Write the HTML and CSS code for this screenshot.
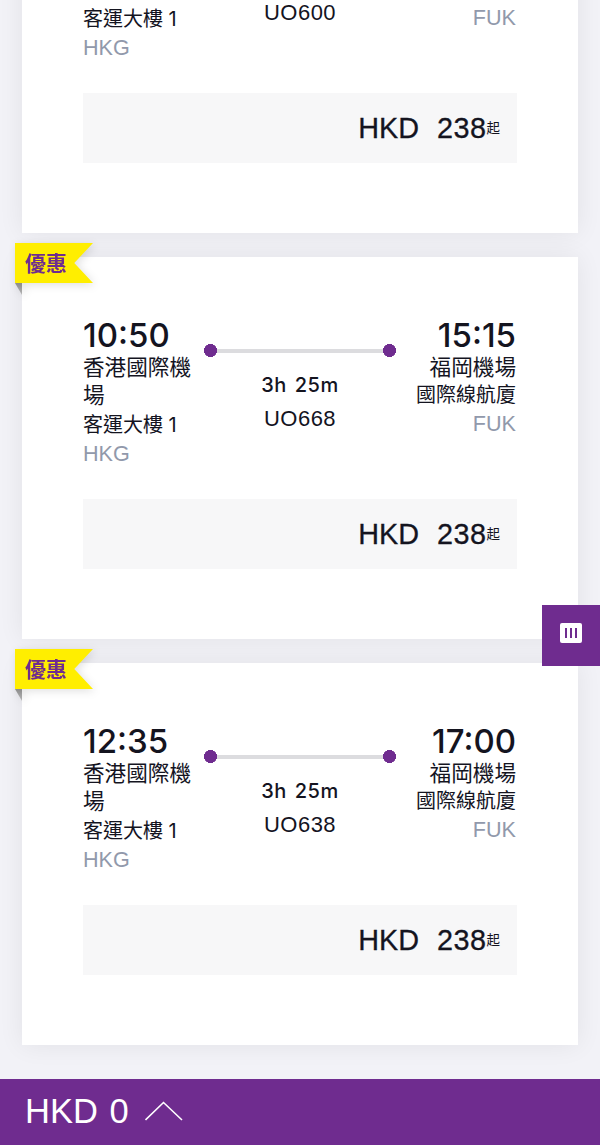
FILE: index.html
```html
<!DOCTYPE html>
<html lang="zh-Hant">
  <head>
    <meta charset="UTF-8" />
    <meta name="viewport" content="width=device-width, initial-scale=1.0" />
    <title>航班選擇</title>
    <link rel="stylesheet" href="styles.css">
  </head>

  <body>
    <div class="flight-list">
      <div class="card">
        <div class="route">
          <div class="point">
            <div class="time"></div>
            <div class="place">香港國際機場</div>
            <div class="terminal">客運大樓 1</div>
            <div class="code">HKG</div>
          </div>
          <div class="middle">
            <div class="track"></div>
            <div class="duration">3h 25m</div>
            <div class="flight-no">UO600</div>
          </div>
          <div class="point point-end">
            <div class="time"></div>
            <div class="place">福岡機場</div>
            <div class="terminal">國際線航廈</div>
            <div class="code">FUK</div>
          </div>
        </div>
        <div class="price"><span class="currency">HKD</span><span class="amount">238</span><span class="from">起</span></div>
      </div>

      <div class="card">
        <div class="badge"><span>優惠</span></div>
        <div class="route">
          <div class="point">
            <div class="time">10:50</div>
            <div class="place">香港國際機場</div>
            <div class="terminal">客運大樓 1</div>
            <div class="code">HKG</div>
          </div>
          <div class="middle">
            <div class="track"></div>
            <div class="duration">3h 25m</div>
            <div class="flight-no">UO668</div>
          </div>
          <div class="point point-end">
            <div class="time">15:15</div>
            <div class="place">福岡機場</div>
            <div class="terminal">國際線航廈</div>
            <div class="code">FUK</div>
          </div>
        </div>
        <div class="price"><span class="currency">HKD</span><span class="amount">238</span><span class="from">起</span></div>
      </div>

      <div class="card">
        <div class="badge"><span>優惠</span></div>
        <div class="route">
          <div class="point">
            <div class="time">12:35</div>
            <div class="place">香港國際機場</div>
            <div class="terminal">客運大樓 1</div>
            <div class="code">HKG</div>
          </div>
          <div class="middle">
            <div class="track"></div>
            <div class="duration">3h 25m</div>
            <div class="flight-no">UO638</div>
          </div>
          <div class="point point-end">
            <div class="time">17:00</div>
            <div class="place">福岡機場</div>
            <div class="terminal">國際線航廈</div>
            <div class="code">FUK</div>
          </div>
        </div>
        <div class="price"><span class="currency">HKD</span><span class="amount">238</span><span class="from">起</span></div>
      </div>
    </div>

    <div class="side-button">
      <svg width="22" height="20" viewBox="0 0 22 20">
        <rect width="22" height="20" rx="2" fill="#fff" />
        <rect x="5" y="5" width="2" height="10" fill="#6f2c8f" />
        <rect x="10" y="5" width="2" height="10" fill="#6f2c8f" />
        <rect x="15" y="5" width="2" height="10" fill="#6f2c8f" />
      </svg>
    </div>

    <div class="total-bar">
      <span class="total">HKD 0</span>
      <svg width="38" height="20" viewBox="0 0 38 20">
        <polyline points="0.5,19 18.5,1.5 37,19" fill="none" stroke="#fff" stroke-width="1.6" />
      </svg>
    </div>
  </body>
</html>
```

FILE: styles.css
```css
html,
body {
  height: 100%;
}

body {
  margin: 0;
  overflow: hidden;
  background: #f2f2f7;
  color: #14141f;
  font-family: "Liberation Sans", "Noto Sans CJK TC", sans-serif;
  font-size: 21.6px;
  line-height: 29px;
}

/* the page is scrolled, the first card starts above the window */
.flight-list {
  margin-top: -149px;
  padding: 0 22px;
  display: flex;
  flex-direction: column;
  gap: 24px;
}

.card {
  position: relative;
  height: 382px;
  box-sizing: border-box;
  padding: 61px 61px 70px;
  background: #fff;
  box-shadow: 0 0 24px rgba(0, 0, 0, 0.07);
}

.route {
  display: flex;
}

.point {
  width: 118px;
  flex-shrink: 0;
}

.point-end {
  text-align: right;
  padding-right: 1px;
  box-sizing: border-box;
}

.time {
  height: 35px;
  font-family: Inter, "Liberation Sans", sans-serif;
  font-size: 33px;
  font-weight: 500;
  line-height: 35px;
}

.place {
  font-family: Inter, "Noto Sans CJK TC", sans-serif;
  font-size: 21.6px;
  line-height: 28px;
}

.terminal {
  font-family: Inter, "Noto Sans CJK TC", sans-serif;
  font-size: 20px;
}

.point:first-child .terminal {
  margin-top: 2px;
}

.code {
  margin-top: -1px;
  color: #9199ab;
}

.middle {
  flex: 1;
  text-align: center;
  padding-top: 26px;
}

.track {
  position: relative;
  height: 13px;
  margin: 0 3px 14px;
}

.track::before {
  content: "";
  position: absolute;
  left: 6px;
  right: 6px;
  top: 5px;
  height: 4px;
  background: #dcdcdf;
}

.track::after {
  content: "";
  position: absolute;
  top: 0;
  left: 0;
  right: 0;
  height: 13px;
  background:
    radial-gradient(circle 6.5px at 6.5px 6.5px, #6f2c8f 98%, transparent 100%),
    radial-gradient(circle 6.5px at calc(100% - 6.5px) 6.5px, #6f2c8f 98%, transparent 100%);
}

.duration {
  font-family: Inter, "Liberation Sans", sans-serif;
  font-size: 20px;
  font-weight: 500;
  letter-spacing: 0.5px;
  word-spacing: 2px;
}

.flight-no {
  margin-top: 4px;
  font-size: 22px;
  letter-spacing: 0.5px;
}

.price {
  display: flex;
  justify-content: flex-end;
  align-items: center;
  height: 70px;
  margin-top: 31px;
  padding-right: 17px;
  background: #f7f7f8;
  font-size: 28.8px;
  -webkit-text-stroke: 0.3px #14141f;
}

.amount {
  margin-left: 18px;
  letter-spacing: 0.5px;
}

.from {
  font-size: 13.5px;
  -webkit-text-stroke: 0;
}

.badge {
  position: absolute;
  left: -7px;
  top: -14px;
  width: 78px;
  height: 52px;
  filter: drop-shadow(2px 2px 4px rgba(0, 0, 0, 0.12));
}

.badge::before {
  content: "";
  position: absolute;
  left: 0;
  top: 0;
  width: 78px;
  height: 40px;
  background: #ffee00;
  clip-path: polygon(0 0, 100% 0, 76% 50%, 100% 100%, 0 100%);
}

/* fold under the ribbon */
.badge::after {
  content: "";
  position: absolute;
  left: 0;
  top: 40px;
  width: 7px;
  height: 12px;
  background: linear-gradient(#8c8c8c, #b4b4b4);
  clip-path: polygon(0 0, 100% 0, 100% 100%);
}

.badge span {
  position: relative;
  z-index: 1;
  display: block;
  padding-left: 10px;
  font-size: 21px;
  font-weight: bold;
  line-height: 41px;
  color: #6f2c8f;
}

.side-button {
  position: fixed;
  right: 0;
  top: 605px;
  width: 58px;
  height: 61px;
  padding-bottom: 6px;
  box-sizing: border-box;
  display: flex;
  justify-content: center;
  align-items: center;
  background: #6f2c8f;
}

.total-bar {
  position: fixed;
  left: 0;
  right: 0;
  bottom: 0;
  height: 66px;
  box-sizing: border-box;
  padding: 0 0 2px 25px;
  display: flex;
  align-items: center;
  gap: 16px;
  background: #6f2c8f;
  color: #fff;
}

.total {
  font-size: 34.5px;
  word-spacing: 2px;
}
```
